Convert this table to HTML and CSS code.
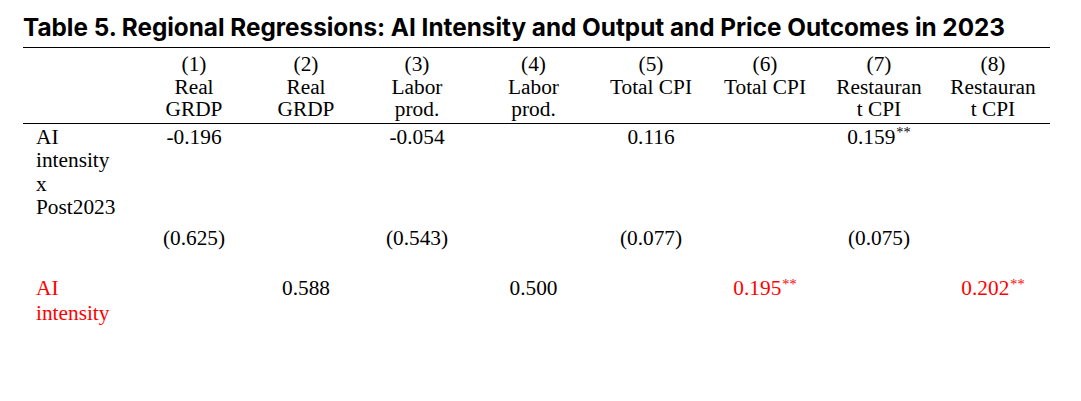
FILE: index.html
```html
<!DOCTYPE html>
<html lang="en">
<head>
<meta charset="utf-8">
<title>Table 5. Regional Regressions</title>
<link rel="stylesheet" href="styles.css">
</head>
<body>
<div class="page">
  <div class="title">Table 5. Regional Regressions: AI Intensity and Output and Price Outcomes in 2023</div>
  <table class="reg">
    <colgroup>
      <col class="w-label">
      <col class="w-114">
      <col class="w-110">
      <col class="w-112">
      <col class="w-121">
      <col class="w-114">
      <col class="w-114">
      <col class="w-114">
      <col class="w-114">
    </colgroup>
    <thead>
      <tr class="row-head">
        <th class="label"></th>
        <th>(1)<br>Real GRDP</th>
        <th>(2)<br>Real GRDP</th>
        <th>(3)<br>Labor prod.</th>
        <th>(4)<br>Labor prod.</th>
        <th>(5)<br>Total CPI</th>
        <th>(6)<br>Total CPI</th>
        <th>(7)<br>Restaurant CPI</th>
        <th>(8)<br>Restaurant CPI</th>
      </tr>
    </thead>
    <tbody>
      <tr class="row-coef">
        <td class="label">AI intensity x Post2023</td>
        <td>-0.196</td>
        <td></td>
        <td>-0.054</td>
        <td></td>
        <td>0.116</td>
        <td></td>
        <td>0.159<sup>**</sup></td>
        <td></td>
      </tr>
      <tr class="row-se">
        <td class="label"></td>
        <td>(0.625)</td>
        <td></td>
        <td>(0.543)</td>
        <td></td>
        <td>(0.077)</td>
        <td></td>
        <td>(0.075)</td>
        <td></td>
      </tr>
      <tr class="row-main">
        <td class="label red">AI intensity</td>
        <td></td>
        <td>0.588</td>
        <td></td>
        <td>0.500</td>
        <td></td>
        <td class="red">0.195<sup>**</sup></td>
        <td></td>
        <td class="red">0.202<sup>**</sup></td>
      </tr>
    </tbody>
  </table>
</div>
</body>
</html>
```

FILE: styles.css
```css
html, body {
  margin: 0;
  padding: 0;
  background: #ffffff;
}

.page {
  padding: 13px 0 0 23px;
  color: #000000;
}

.title {
  font-family: Inter, "Liberation Sans", sans-serif;
  font-weight: 700;
  font-size: 24.3px;
  line-height: 28px;
  white-space: nowrap;
  margin-bottom: 6px;
}

.reg {
  border-collapse: collapse;
  table-layout: fixed;
  width: 1027px;
  font-family: "Liberation Serif", "Times New Roman", serif;
  font-size: 21.33px;
}

.w-label { width: 114px; }
.w-114 { width: 114px; }
.w-110 { width: 110px; }
.w-112 { width: 112px; }
.w-121 { width: 121px; }

.reg th,
.reg td {
  padding: 0 14px;
  text-align: center;
  vertical-align: top;
  font-weight: 400;
}

.reg td {
  line-height: 23.5px;
}

.reg .label {
  text-align: left;
  padding-left: 13px;
  padding-right: 18px;
}

.row-head th {
  border-top: 1px solid #000000;
  border-bottom: 1px solid #000000;
  line-height: 22.5px;
  padding-top: 5px;
  padding-bottom: 2px;
  overflow-wrap: anywhere;
}

.row-coef td {
  padding-top: 2px;
}

.row-se td {
  padding-top: 7px;
}

.row-main td {
  padding-top: 26px;
  line-height: 25px;
}

.red {
  color: #ff0000;
}

sup {
  font-size: 0.67em;
  line-height: 0;
  vertical-align: 0.45em;
  margin-left: 1px;
}
```
